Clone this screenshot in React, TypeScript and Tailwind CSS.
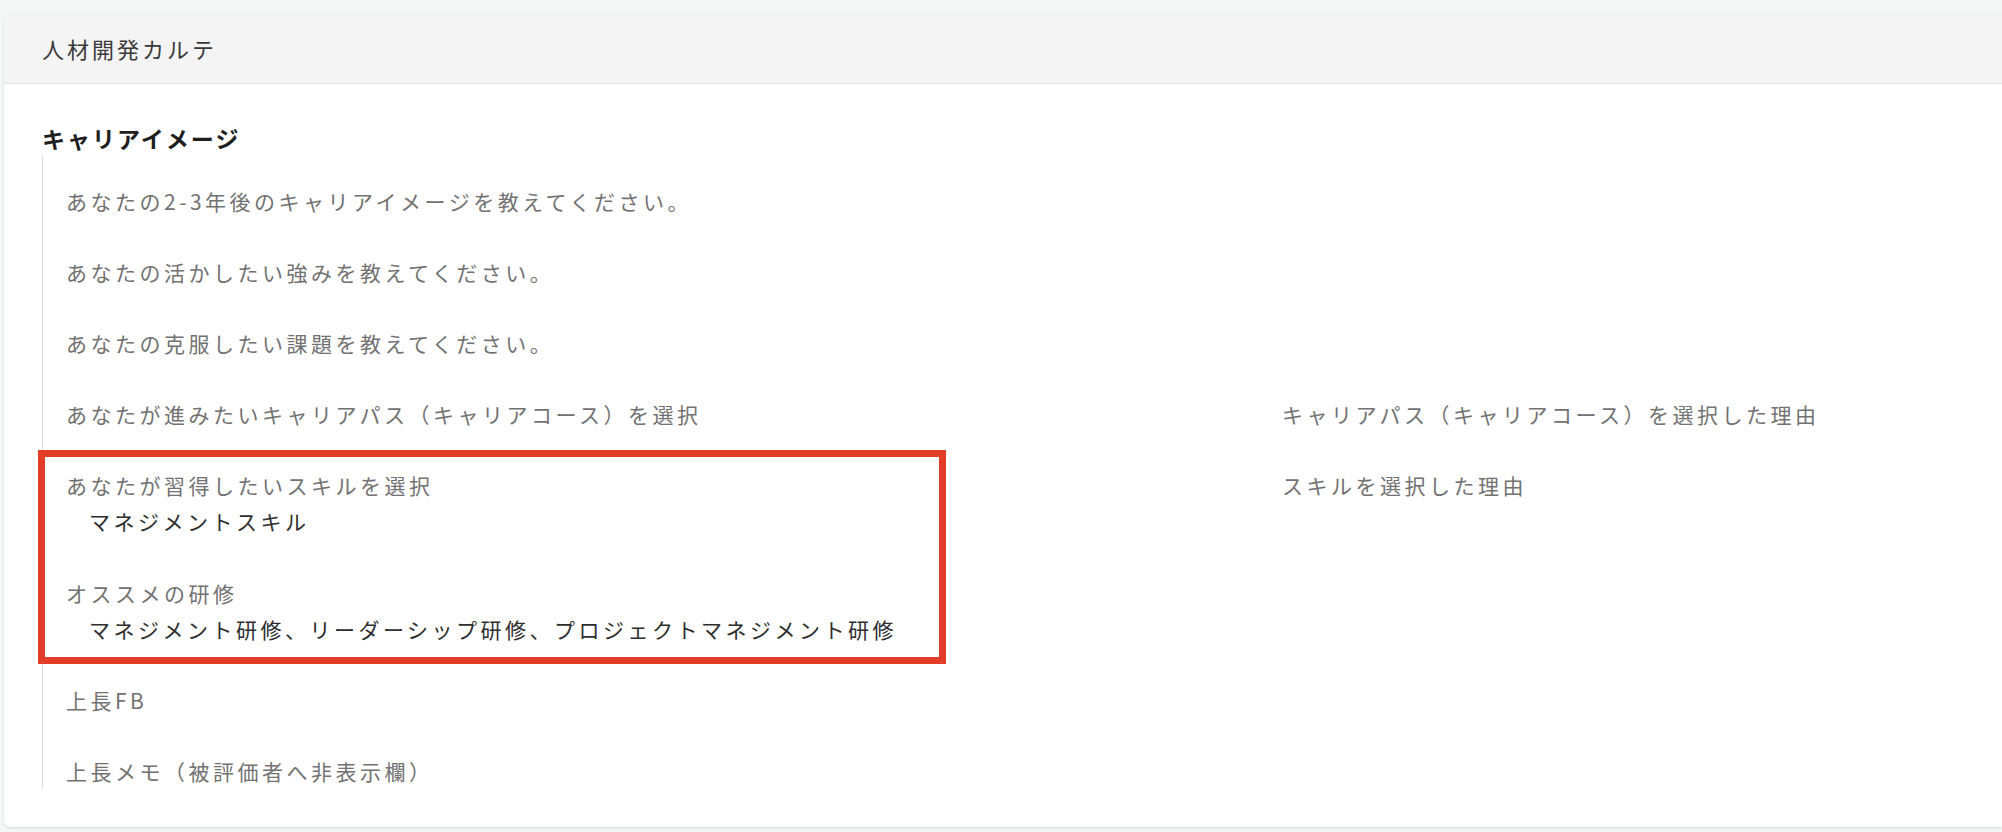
import React from 'react';

type Row = {
  label: string;
  value?: string;
  side?: string;
};

const rowsTop: Row[] = [
  { label: 'あなたの2-3年後のキャリアイメージを教えてください。' },
  { label: 'あなたの活かしたい強みを教えてください。' },
  { label: 'あなたの克服したい課題を教えてください。' },
  { label: 'あなたが進みたいキャリアパス（キャリアコース）を選択', side: 'キャリアパス（キャリアコース）を選択した理由' },
];

const rowsMarked: Row[] = [
  { label: 'あなたが習得したいスキルを選択', value: 'マネジメントスキル', side: 'スキルを選択した理由' },
  { label: 'オススメの研修', value: 'マネジメント研修、リーダーシップ研修、プロジェクトマネジメント研修' },
];

const rowsBottom: Row[] = [{ label: '上長FB' }, { label: '上長メモ（被評価者へ非表示欄）' }];

const Item: React.FC<{ row: Row }> = ({ row }) => (
  <div className="flex">
    <div className="w-[1216px] shrink-0">
      <div className="h-[36px] leading-[36px] text-[#727272] whitespace-nowrap">{row.label}</div>
      {row.value && (
        <div className="h-[36px] leading-[36px] pl-[23px] text-[#2e2e2e] whitespace-nowrap">{row.value}</div>
      )}
    </div>
    {row.side && <div className="h-[36px] leading-[36px] text-[#727272] whitespace-nowrap">{row.side}</div>}
  </div>
);

export default function App() {
  return (
    <div className="h-[832px] w-full overflow-hidden bg-[#f6f7f7] pt-[13px] pl-[4px] font-['Noto_Sans_CJK_JP',sans-serif]">
      <div className="h-[814px] bg-white rounded-l-md shadow-[0_1px_3px_rgba(0,0,0,0.12)] overflow-hidden">
        <div className="h-[71px] bg-[#f4f4f4] border-b border-[#e4e4e4] flex items-center px-[38px]">
          <span className="text-[22px] tracking-[3px] text-[#3a3a3a]">人材開発カルテ</span>
        </div>

        <div className="pl-[38px] pt-[38px]">
          <h2 className="h-[33px] leading-[33px] text-[23px] tracking-[2px] font-bold text-[#1f1f1f]">キャリアイメージ</h2>

          <div className="border-l border-[#dcdcdc] pt-[28px] pl-[23px] text-[21px] tracking-[3.5px]">
            <div className="flex flex-col gap-[35px]">
              {rowsTop.map((r) => (
                <Item key={r.label} row={r} />
              ))}

              <div className="relative flex flex-col gap-[36px]">
                {rowsMarked.map((r) => (
                  <Item key={r.label} row={r} />
                ))}
                <div className="absolute -left-[28px] -top-[17px] -bottom-[17px] w-[908px] border-[7px] border-[#e23d28] pointer-events-none" />
              </div>

              {rowsBottom.map((r) => (
                <Item key={r.label} row={r} />
              ))}
            </div>
          </div>
        </div>
      </div>
    </div>
  );
}
